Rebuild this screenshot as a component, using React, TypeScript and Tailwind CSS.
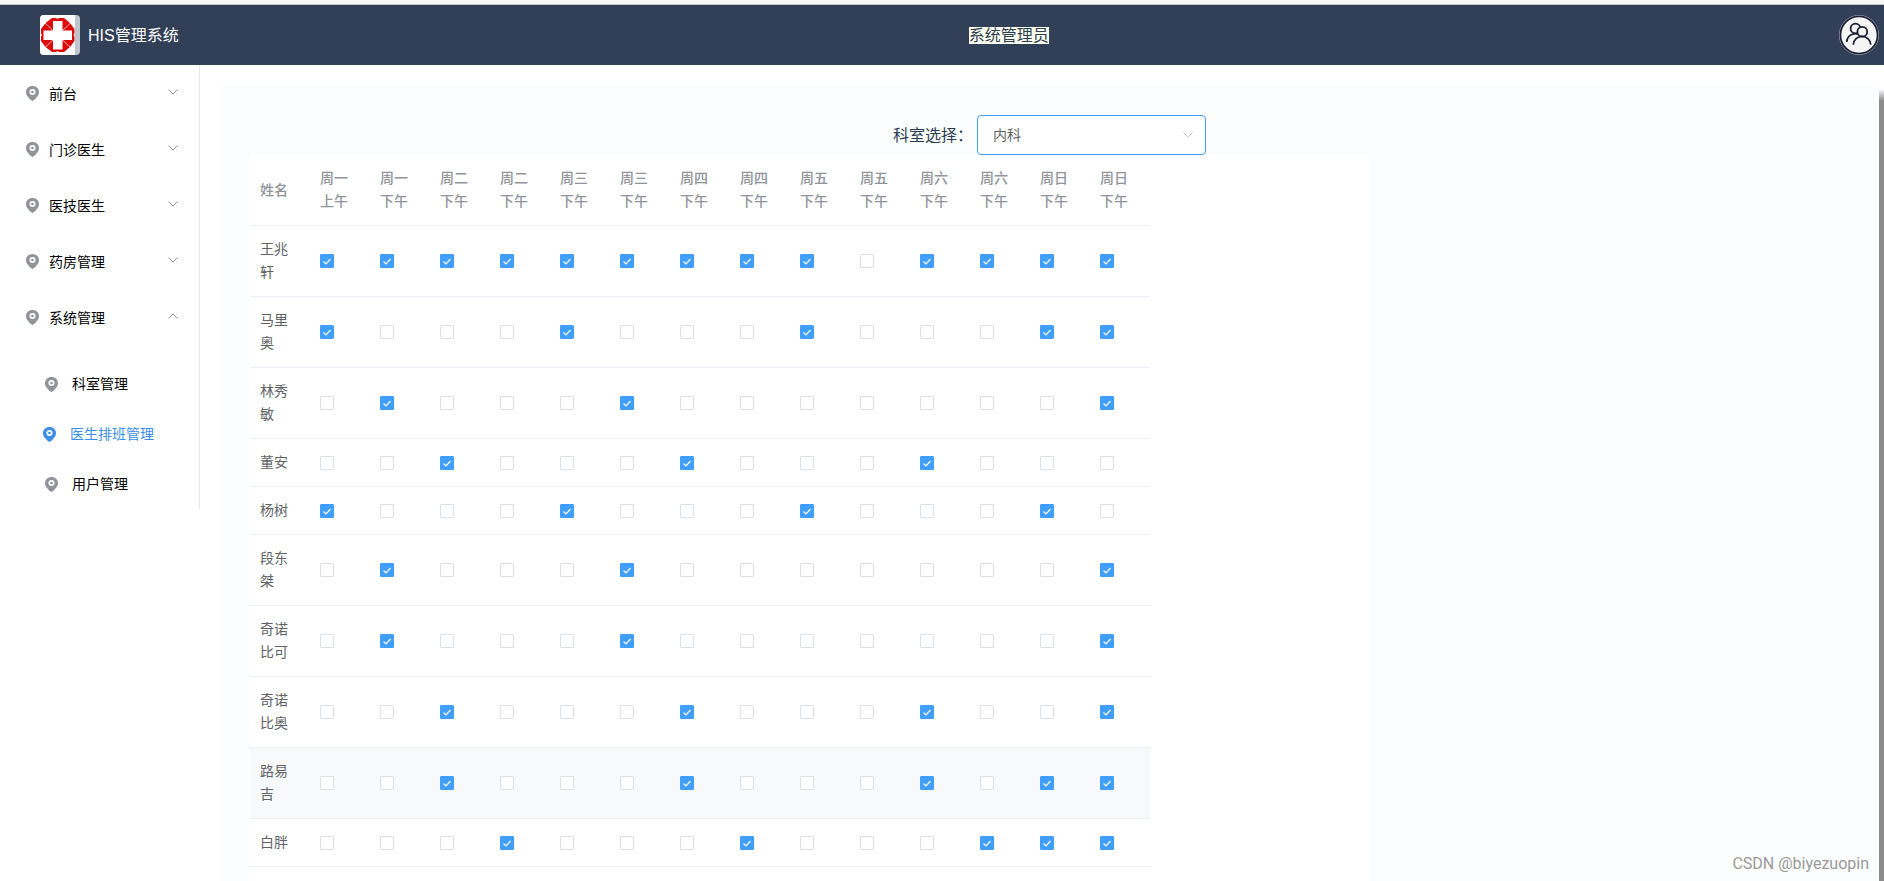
import { useState } from "react";
import clsx from "clsx";

const shifts = [
  "周一上午", "周一下午", "周二下午", "周二下午", "周三下午", "周三下午", "周四下午",
  "周四下午", "周五下午", "周五下午", "周六下午", "周六下午", "周日下午", "周日下午",
];

// one character per half-day shift, 1 = on duty
const doctors = [
  { name: "王兆轩", plan: "11111111101111" },
  { name: "马里奥", plan: "10001000100011" },
  { name: "林秀敏", plan: "01000100000001" },
  { name: "董安", plan: "00100010001000" },
  { name: "杨树", plan: "10001000100010" },
  { name: "段东桀", plan: "01000100000001" },
  { name: "奇诺比可", plan: "01000100000001" },
  { name: "奇诺比奥", plan: "00100010001001" },
  { name: "路易吉", plan: "00100010001011", highlighted: true },
  { name: "白胖", plan: "00010001000111" },
];

const menus = ["前台", "门诊医生", "医技医生", "药房管理", "系统管理"];
const subMenus = ["科室管理", "医生排班管理", "用户管理"];

function PinIcon() {
  return (
    <span className="flex w-6 shrink-0 justify-center">
      <svg width="13" height="15" viewBox="0 0 13 15" fill="none">
        <path
          d="M6.5 0C2.8 0 0 2.7 0 6.2c0 3.3 2.8 5.400 4.500 7.600L6.500 15l2-1.200C10.200 11.600 13 9.500 13 6.200 13 2.700 10.200 0 6.500 0z"
          fill="currentColor"
        />
        <circle cx="6.500" cy="6" r="2.200" stroke="#fff" strokeWidth="1.700" />
      </svg>
    </span>
  );
}

function Chevron({ up = false, className }: { up?: boolean; className?: string }) {
  return (
    <svg width="12" height="8" viewBox="0 0 12 8" fill="none" stroke="currentColor" className={className}>
      <path d={up ? "M1.500 6.500L6 2l4.500 4.500" : "M1.500 1.500L6 6l4.500-4.500"} />
    </svg>
  );
}

function Logo() {
  return (
    <svg width="40" height="40" viewBox="0 0 40 40" className="rounded bg-[#c0c4cc]">
      <rect width="35" height="40" fill="#fff" />
      <path d="M12 3h4l1.500 1L19 3h5l6 5 4.500 6v4.500L33.500 20l1 1.500V26L30 32l-6 5h-5l-1.500-1-1.500 1h-4l-6.500-5L1 26v-4.500L2 20l-1-1.500V14l4.500-6z" fill="#dc0a0a" />
      <path d="M13 6h9.500v9.500H32V25h-9.500v9.500H13V25H3.500v-9.500H13z" fill="#fff" />
      <path d="M5 8l8 7.500M30.500 8l-8 7.500M5 32.500L13 25M30.500 32.500l-8-7.500" stroke="#fff" strokeWidth=".7" />
    </svg>
  );
}

function Avatar() {
  return (
    <svg width="40" height="40" viewBox="0 0 40 40" fill="none" stroke="#1d1d33" strokeWidth="1.800">
      <circle cx="20" cy="20" r="19.500" fill="#f5f5f5" stroke="#b4b8c2" strokeWidth="1" />
      <circle cx="20" cy="20" r="18.600" />
      <path d="M7.700 27c.2-4 3-7.500 7.300-8.200 1.500-.2 2.700-.1 4 .3" />
      <circle cx="16.500" cy="13.500" r="4.900" />
      <circle cx="23.300" cy="16.700" r="4.900" fill="#f5f5f5" />
      <path d="M14.300 29.700c.3-5 4.200-8.300 8.700-8.300s8.400 3.300 8.700 8.300" />
    </svg>
  );
}

function ShiftBox({ label, initial }: { label: string; initial: boolean }) {
  const [checked, setChecked] = useState(initial);

  return (
    <label className="grid size-3.5 cursor-pointer">
      <input
        type="checkbox"
        aria-label={label}
        checked={checked}
        onChange={(e) => setChecked(e.target.checked)}
        className="peer col-start-1 row-start-1 size-3.5 appearance-none rounded-[1px] border border-[#dcdfe6] bg-white checked:border-[#409eff] checked:bg-[#409eff]"
      />
      <svg
        viewBox="0 0 14 14"
        fill="none"
        stroke="#fff"
        className="pointer-events-none col-start-1 row-start-1 hidden size-3.5 peer-checked:block"
      >
        <path d="M3.500 7.500L6 10l4.500-5" strokeWidth="1.200" />
      </svg>
    </label>
  );
}

function Sidebar() {
  const [active, setActive] = useState("医生排班管理");

  return (
    <nav className="w-[200px] shrink-0 self-start border-r border-[#e6e6e6] text-sm text-black">
      <ul>
        {menus.map((menu) => (
          <li key={menu}>
            <button type="button" className="flex h-14 w-full items-center px-5 pt-px">
              <span className="text-[#909399]"><PinIcon /></span>
              <span className="ml-[5px] flex-1 text-left">{menu}</span>
              <Chevron up={menu === "系统管理"} className="mb-1 text-[#909399]" />
            </button>
          </li>
        ))}
      </ul>
      <ul className="pt-3.5">
        {subMenus.map((menu) => (
          <li key={menu}>
            <a
              href="#"
              onClick={() => setActive(menu)}
              className={clsx(
                "flex h-[50px] items-center gap-[9px]",
                menu === active ? "pl-[37px] text-[#3a8ee6]" : "pl-[39px]"
              )}
            >
              <span className={menu === active ? "" : "text-[#909399]"}><PinIcon /></span>
              {menu}
            </a>
          </li>
        ))}
      </ul>
    </nav>
  );
}

function ScheduleTable() {
  return (
    <div className="w-[70%] flex-1 bg-white">
      <table className="w-[900px] table-fixed text-left text-sm leading-[23px] text-[#606266]">
        <thead className="text-[#909399]">
          <tr className="border-b border-[#ebeef5]">
            <th className="px-2.5 py-3 font-medium">姓名</th>
            {shifts.map((shift, i) => (
              <th key={i} className="px-2.5 py-3 font-medium">{shift}</th>
            ))}
          </tr>
        </thead>
        <tbody>
          {doctors.map((doctor) => (
            <tr
              key={doctor.name}
              className={clsx("border-b border-[#ebeef5] hover:bg-[#f5f7fa]", doctor.highlighted && "bg-[#f8f9fb]")}
            >
              <td className="px-2.5 py-3">{doctor.name}</td>
              {shifts.map((shift, i) => (
                <td key={i} className="px-2.5">
                  <ShiftBox label={`${doctor.name} ${shift}`} initial={doctor.plan[i] === "1"} />
                </td>
              ))}
            </tr>
          ))}
        </tbody>
      </table>
    </div>
  );
}

export default function App() {
  const [department, setDepartment] = useState("内科");

  return (
    <div className="relative flex min-h-screen flex-col bg-white font-['Liberation_Sans','Noto_Sans_CJK_SC',sans-serif] text-[#2c3e50]">
      <div className="h-[5px] border-b border-[#c8c8c8] bg-[#f8f8f8]" />
      <header className="flex h-[60px] items-center bg-[#324057] pr-[5px] pl-10">
        <Logo />
        <span className="ml-2 pt-0.5 text-base text-white">HIS管理系统</span>
        <div className="flex flex-1 justify-center">
          <span className="bg-[#fffff0] text-base leading-[17px]">系统管理员</span>
        </div>
        <button type="button" aria-label="用户">
          <Avatar />
        </button>
      </header>

      <div className="flex flex-1">
        <Sidebar />
        <main className="flex flex-1 flex-col pt-5 pl-5">
          <section className="flex flex-1 flex-col bg-[#fbfdff] px-[30px] pt-[30px]">
            <div className="flex items-center justify-center gap-1">
              <label htmlFor="department" className="pt-0.5 text-base">科室选择：</label>
              <div className="relative">
                <select
                  id="department"
                  value={department}
                  onChange={(e) => setDepartment(e.target.value)}
                  className="block h-10 w-[229px] appearance-none rounded border border-[#409eff] bg-white px-[15px] text-sm text-[#606266] outline-none"
                >
                  <option>内科</option>
                  <option>外科</option>
                </select>
                <Chevron className="pointer-events-none absolute top-4 right-3 text-[#c0c4cc]" />
              </div>
            </div>
            <ScheduleTable />
          </section>
        </main>
        <div className="mt-6 w-[5px] bg-linear-to-b from-white to-[#8a8a8a] to-[12px]" />
      </div>

      <p className="absolute right-[15px] bottom-[5px] font-[Roboto,sans-serif] text-base text-[#999]">CSDN @biyezuopin</p>
    </div>
  );
}
